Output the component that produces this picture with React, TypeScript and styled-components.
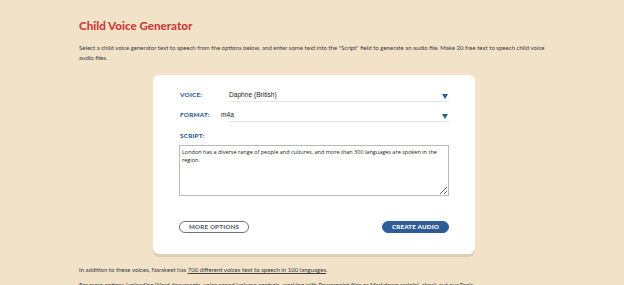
import styled, {createGlobalStyle} from 'styled-components';

const GlobalStyle = createGlobalStyle`
  html, body {
    margin: 0;
    padding: 0;
    background: #f1e2c8;
    overflow: hidden;
  }
`;

function Caret() {
  return (
    <svg width="6" height="5" viewBox="0 0 6 5">
      <path d="M0 0 H6 L3 5 Z" fill="#2f5c98" />
    </svg>
  );
}

function App() {
  return (
    <>
      <GlobalStyle />
      <Page>
        <Title>Child Voice Generator</Title>
        <Intro>
          Select a child voice generator text to speech from the options below, and enter some text
          into the "Script" field to generate an audio file. Make 20 free text to speech child voice
          audio files.
        </Intro>
        <Card>
          <Row>
            <Label>Voice:</Label>
            <Select>
              <Value>Daphne (British)</Value>
              <Caret />
            </Select>
          </Row>
          <Row>
            <Label>Format:</Label>
            <Select>
              <Value $shift={-8}>m4a</Value>
              <Caret />
            </Select>
          </Row>
          <ScriptLabel>Script:</ScriptLabel>
          <Script
            defaultValue="London has a diverse range of people and cultures, and more than 300 languages are spoken in the region."
          />
          <Actions>
            <Button>More options</Button>
            <Button $primary>Create audio</Button>
          </Actions>
        </Card>
        <Notes>
          <Note>
            In addition to these voices, Narakeet has{' '}
            <a href="#">700 different voices text to speech in 100 languages</a>.
          </Note>
          <Note>
            For more options (uploading Word documents, voice speed/volume controls, working with
            Powerpoint files or Markdown scripts), check out our Tools.
          </Note>
        </Notes>
      </Page>
    </>
  );
}

const Page = styled.div`
  width: 470px;
  margin: 0 auto 0 79px;
  padding-top: 17px;
  font-family: 'Lato', 'Open Sans', sans-serif;
  color: #3d3d3d;
`;

const Title = styled.h1`
  margin: 0;
  font-family: 'Lato', sans-serif;
  font-weight: 900;
  font-size: 11.6px;
  line-height: 18px;
  color: #cc3d3d;
`;

const Intro = styled.p`
  margin: 8px 0 0;
  font-size: 6.05px;
  line-height: 10px;
`;

const Card = styled.div`
  width: 322px;
  margin: 12px 0 0 74px;
  box-sizing: border-box;
  padding: 12px 26px 21px;
  background: #fff;
  border-radius: 6px;
  box-shadow: 0 3px 0 #dccfb6;
`;

const Row = styled.div`
  display: flex;
  align-items: stretch;
  height: 15px;
  & + & {
    margin-top: 5px;
  }
`;

const Label = styled.div`
  width: 49px;
  flex: none;
  padding-left: 1px;
  font-family: 'Lato', sans-serif;
  font-weight: 900;
  font-size: 6.4px;
  letter-spacing: 0.2px;
  text-transform: uppercase;
  color: #2f5c98;
  display: flex;
  align-items: center;
`;

const Select = styled.div`
  flex: 1;
  display: flex;
  align-items: center;
  justify-content: space-between;
  padding-right: 1px;
  border-bottom: 1px solid #e6e6e6;
  svg {
    margin-top: 4px;
  }
`;

const Value = styled.span<{$shift?: number}>`
  margin-left: ${p => p.$shift ?? 0}px;
  font-family: 'Liberation Sans', Arial, sans-serif;
  font-size: 6.6px;
  color: #222;
`;

const ScriptLabel = styled(Label)`
  height: 10px;
  margin-top: 8px;
`;

const Script = styled.textarea`
  display: block;
  box-sizing: border-box;
  width: 100%;
  height: 51px;
  margin-top: 5px;
  padding: 2px 2px;
  resize: both;
  overflow: scroll;
  border: 1px solid #b9b9b9;
  font-family: 'Open Sans', sans-serif;
  font-size: 5.5px;
  line-height: 8px;
  color: #222;
  &::-webkit-scrollbar {
    width: 7px;
    height: 7px;
    background: #f1f1f1;
  }
  &::-webkit-scrollbar-thumb {
    background: #f1f1f1;
  }
  &::-webkit-scrollbar-corner {
    background: #e8e8e8;
  }
`;

const Actions = styled.div`
  display: flex;
  justify-content: space-between;
  margin-top: 25px;
`;

const Button = styled.button<{$primary?: boolean}>`
  height: 12px;
  padding: 0 8px;
  border-radius: 6px;
  border: 1px solid ${p => (p.$primary ? '#2f5c98' : '#6b7088')};
  background: ${p => (p.$primary ? '#2f5c98' : '#fff')};
  color: ${p => (p.$primary ? '#fff' : '#5a5f73')};
  font-family: 'Lato', sans-serif;
  font-weight: 900;
  font-size: 6.2px;
  letter-spacing: 0.2px;
  text-transform: uppercase;
  line-height: 10px;
  width: ${p => (p.$primary ? 67 : 70)}px;
`;

const Notes = styled.div`
  display: flex;
  flex-direction: column;
  gap: 5px;
  margin-top: 11px;
`;

const Note = styled.p`
  margin: 0;
  font-size: 6.05px;
  line-height: 10px;
  a {
    color: #3d3d3d;
  }
`;

export default App;
